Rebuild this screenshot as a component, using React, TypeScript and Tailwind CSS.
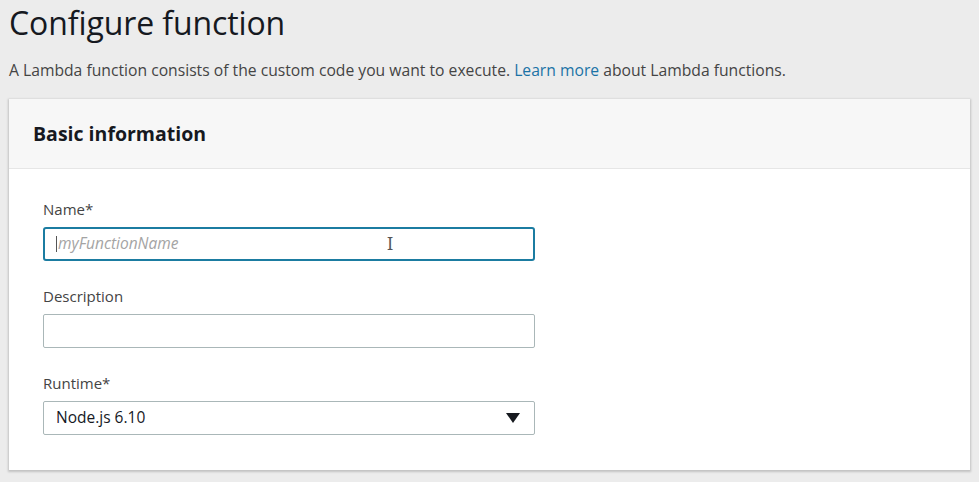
import React from 'react';

const Field: React.FC<{ label: string; children: React.ReactNode }> = ({ label, children }) => (
  <div className="flex flex-col">
    <label className="text-[15px] leading-[18px] text-[#444444] mb-[9px]">{label}</label>
    {children}
  </div>
);

const App: React.FC = () => {
  return (
    <div
      className="w-[979px] h-[482px] overflow-hidden bg-[#ececec] px-[9px]"
      style={{ fontFamily: '"Open Sans", "Noto Sans", sans-serif' }}
    >
      <h1 className="text-[32px] leading-[38px] text-[#16191f] pt-[4px] tracking-[-0.1px]">Configure function</h1>
      <p className="text-[15.7px] leading-[20px] text-[#444444] mt-[18px]">
        A Lambda function consists of the custom code you want to execute.{' '}
        <span className="text-[#1b73a6]">Learn more</span> about Lambda functions.
      </p>

      <div className="mt-[19px] w-[961px] bg-white shadow-[0_1px_2px_1px_rgba(0,0,0,0.18)]">
        <div className="h-[70px] bg-[#f7f7f7] border-b border-[#e6e6e6] flex items-center px-[24px]">
          <h2 className="text-[19.5px] font-bold text-[#16191f]">Basic information</h2>
        </div>
        <div className="px-[34px] pt-[31px] pb-[35px] flex flex-col gap-[26px]">
          <Field label="Name*">
            <div className="relative w-[492px] h-[34px] rounded-[3px] border-2 border-[#1b7ca1] bg-white flex items-center pl-[11px]">
              <span className="w-px h-[16px] bg-[#555]" />
              <span className="italic text-[15.5px] text-[#a4a4a4] ml-px">myFunctionName</span>
              <span className="absolute left-[342px] top-[7px] text-[#555] text-[18px] leading-[18px] font-serif">I</span>
            </div>
          </Field>
          <Field label="Description">
            <div className="w-[492px] h-[34px] rounded-[2px] border border-[#aab7b8] bg-white" />
          </Field>
          <Field label="Runtime*">
            <div className="w-[492px] h-[34px] rounded-[2px] border border-[#aab7b8] bg-white flex items-center justify-between pl-[12px] pr-[14px]">
              <span className="text-[15.5px] text-[#16191f]">Node.js 6.10</span>
              <svg width="14" height="10" viewBox="0 0 14 10">
                <path d="M0 0 H14 L7 10 Z" fill="#16191f" />
              </svg>
            </div>
          </Field>
        </div>
      </div>
    </div>
  );
};

export default App;
